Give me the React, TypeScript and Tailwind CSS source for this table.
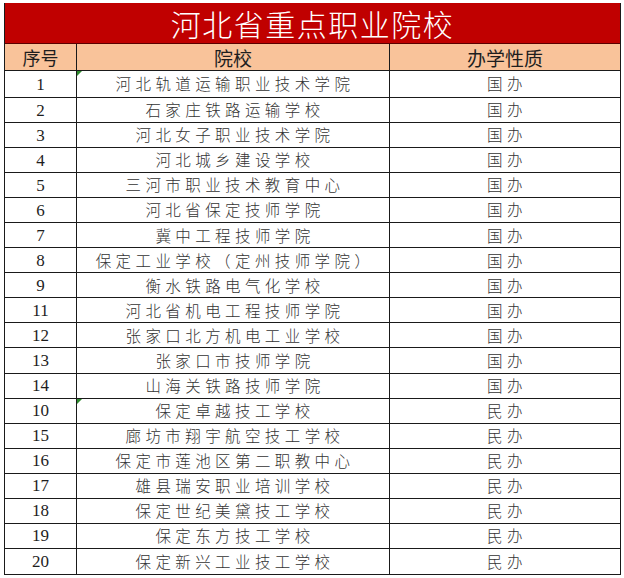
const rows: [string, string, string, boolean?][] = [
  ['1', '河北轨道运输职业技术学院', '国办', true],
  ['2', '石家庄铁路运输学校', '国办'],
  ['3', '河北女子职业技术学院', '国办'],
  ['4', '河北城乡建设学校', '国办'],
  ['5', '三河市职业技术教育中心', '国办'],
  ['6', '河北省保定技师学院', '国办'],
  ['7', '冀中工程技师学院', '国办'],
  ['8', '保定工业学校（定州技师学院）', '国办'],
  ['9', '衡水铁路电气化学校', '国办'],
  ['11', '河北省机电工程技师学院', '国办'],
  ['12', '张家口北方机电工业学校', '国办'],
  ['13', '张家口市技师学院', '国办'],
  ['14', '山海关铁路技师学院', '国办'],
  ['10', '保定卓越技工学校', '民办', true],
  ['15', '廊坊市翔宇航空技工学校', '民办'],
  ['16', '保定市莲池区第二职教中心', '民办'],
  ['17', '雄县瑞安职业培训学校', '民办'],
  ['18', '保定世纪美黛技工学校', '民办'],
  ['19', '保定东方技工学校', '民办'],
  ['20', '保定新兴工业技工学校', '民办'],
];

const cjk = "font-['Noto_Sans_CJK_SC',sans-serif]";

export default function App() {
  return (
    <div className="min-h-[578px] w-[624px] bg-white pl-[4px] pt-[3px]">
      <div className="w-[617px] border-x border-b border-[#1a1a1a]">
        <div
          className={`flex h-[41px] items-center justify-center border-b border-[#5a0000] bg-[#c00000] text-[30px] font-light leading-none tracking-[1.5px] text-white ${cjk}`}
        >
          河北省重点职业院校
        </div>
        <div
          className={`grid h-[27px] grid-cols-[72px_313px_1fr] border-b border-[#1a1a1a] bg-[#f9c39a] text-[18px] leading-none text-[#1e1e1e] ${cjk}`}
        >
          <div className="flex items-center justify-center border-r border-[#1a1a1a]">序号</div>
          <div className="flex items-center justify-center border-r border-[#1a1a1a] text-[19px]">院校</div>
          <div className="flex items-center justify-center text-[19px]">办学性质</div>
        </div>
        {rows.map(([no, name, kind, mark], i) => (
          <div
            key={i}
            className={`grid grid-cols-[72px_313px_1fr] ${i === 0 ? 'h-[27px]' : 'h-[25.05px]'} ${
              i === rows.length - 1 ? '' : 'border-b border-[#1a1a1a]'
            }`}
          >
            <div className="flex items-center justify-center border-r border-[#1a1a1a] font-['Liberation_Serif',serif] text-[17px] leading-none text-[#1e1e1e]">
              {no}
            </div>
            <div
              className={`relative flex items-center justify-center border-r border-[#1a1a1a] pl-[4px] text-[15.5px] font-light leading-none tracking-[4.4px] text-[#333] ${cjk}`}
            >
              {mark && (
                <span className="absolute left-0 top-0 h-0 w-0 border-r-[5px] border-t-[5px] border-r-transparent border-t-[#2e8b2e]" />
              )}
              {name}
            </div>
            <div
              className={`flex items-center justify-center pl-[4px] text-[15.5px] font-light leading-none tracking-[4.4px] text-[#333] ${cjk}`}
            >
              {kind}
            </div>
          </div>
        ))}
      </div>
    </div>
  );
}
